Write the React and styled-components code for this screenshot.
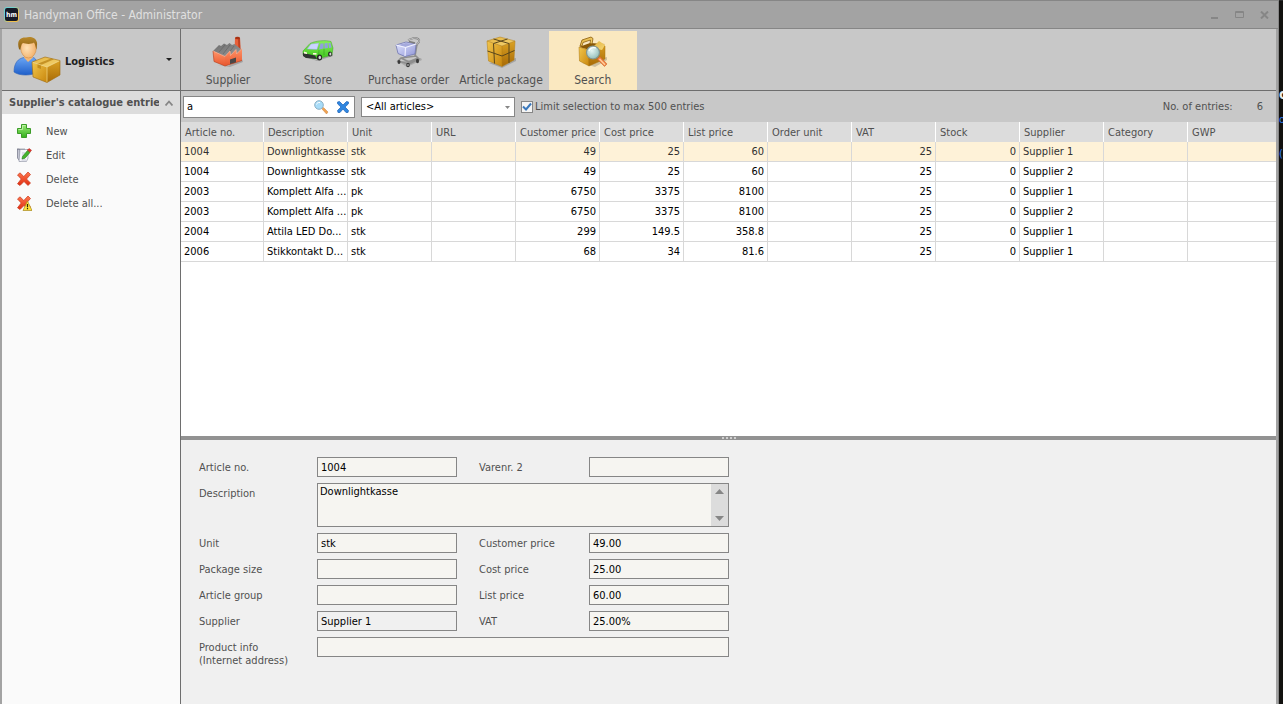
import React, { useState } from "react";
import styled, { createGlobalStyle } from "styled-components";

const GlobalStyle = createGlobalStyle`
  * {
    box-sizing: border-box;
  }
  body {
    margin: 0;
    background: #12110f;
  }
  body, button, input, select, textarea {
    font-family: "DejaVu Sans Condensed", "DejaVu Sans", sans-serif;
    font-size: 11px;
  }
  button {
    border: 0;
    padding: 0;
    background: none;
    color: inherit;
  }
`;

const Desktop = styled.div`
  display: flex;
  min-height: 100vh;
`;

const Window = styled.div`
  flex: 1;
  min-width: 0;
  display: flex;
  flex-direction: column;
  border-top: 1px solid #868686;
  border-right: 1px solid #868686;
  background: #a3a3a3;
`;

const Behind = styled.div`
  width: 4px;
  overflow: hidden;
  border-top: 1px solid #2a2a2a;
  padding-top: 83px;
  color: #2f7ff0;
  line-height: 24px;
  white-space: nowrap;
  strong {
    display: block;
    color: #e8e8e8;
    font-size: 14px;
    line-height: 20px;
  }
  span {
    display: block;
    padding-top: 4px;
  }
  span + span {
    padding-top: 10px;
  }
`;

const TitleBar = styled.header`
  display: flex;
  align-items: center;
  height: 28px;
  padding: 0 1px 0 4px;
  border-bottom: 1px solid #868686;
`;

const Title = styled.h1`
  flex: 1;
  margin: 0 0 0 5px;
  font-size: 12px;
  font-weight: 400;
  color: #e0e0e0;
`;

const WindowButton = styled.button`
  display: flex;
  width: 25px;
  height: 16px;
  align-items: center;
  justify-content: center;
`;

const Main = styled.div`
  flex: 1;
  display: flex;
  padding: 0 2px;
`;

const Sidebar = styled.aside`
  width: 179px;
  flex: none;
  background: #fafafa;
  border-right: 1px solid #6e6e6e;
  color: #505050;
`;

const ModuleButton = styled.button`
  display: flex;
  align-items: center;
  width: 100%;
  height: 62px;
  padding: 0 8px 0 11px;
  background: #c8c8c8;
  border-bottom: 1px solid #6e6e6e;
  font-weight: 700;
  color: #202020;
  text-align: left;
  span {
    flex: 1;
    padding: 3px 0 0 4px;
  }
`;

const SectionHeader = styled.button`
  display: flex;
  align-items: center;
  width: 100%;
  height: 23px;
  padding: 0 7px;
  background: #dcdcdc;
  font-weight: 700;
  text-align: left;
  span {
    flex: 1;
    margin-right: 6px;
    overflow: hidden;
    white-space: nowrap;
  }
`;

const ActionList = styled.ul`
  list-style: none;
  margin: 0;
  padding: 5px 0;
`;

const ActionButton = styled.button`
  display: flex;
  align-items: center;
  gap: 14px;
  width: 100%;
  height: 24px;
  padding-left: 14px;
`;

const Content = styled.main`
  flex: 1;
  min-width: 0;
  display: flex;
  flex-direction: column;
  background: #c8c8c8;
`;

const Toolbar = styled.nav`
  display: flex;
  gap: 2px;
  height: 62px;
  padding: 2px 3px 0;
  border-bottom: 1px solid #6e6e6e;
`;

const ToolButton = styled.button`
  display: flex;
  flex-direction: column;
  align-items: center;
  gap: 4px;
  min-width: 88px;
  padding: 5px 4px 0;
  font-size: 12px;
  line-height: 16px;
  color: #505050;
  background: ${(props) => (props.$active ? "#fae8c0" : "transparent")};
`;

const FilterBar = styled.div`
  display: flex;
  align-items: center;
  height: 31px;
  padding: 0 13px 0 2px;
  color: #505050;
`;

const SearchBox = styled.div`
  display: flex;
  align-items: center;
  width: 172px;
  height: 22px;
  background: #fff;
  border: 1px solid #868686;
  input {
    flex: 1;
    min-width: 0;
    height: 18px;
    border: 0;
    padding: 0 3px;
    outline: 0;
    background: none;
  }
  button {
    display: flex;
    margin-right: 4px;
  }
  button:first-of-type {
    margin-right: 7px;
  }
`;

const SelectBox = styled.div`
  position: relative;
  margin: 0 6px;
  select {
    display: block;
    appearance: none;
    width: 154px;
    height: 20px;
    padding: 0 16px 0 4px;
    border: 1px solid #868686;
    border-radius: 0;
    background: #fff;
    color: #000;
  }
  svg {
    position: absolute;
    right: 5px;
    top: 9px;
    pointer-events: none;
  }
`;

const CheckLabel = styled.label`
  display: flex;
  align-items: center;
  gap: 2px;
  input {
    position: absolute;
    width: 12px;
    height: 12px;
    margin: 0;
    opacity: 0;
  }
`;

const EntryCount = styled.div`
  display: flex;
  gap: 24px;
  margin-left: auto;
`;

const TableArea = styled.div`
  flex: 1;
  overflow: hidden;
  background: #fff;
`;

const Table = styled.table`
  width: 100%;
  table-layout: fixed;
  border-collapse: separate;
  border-spacing: 0;
  th,
  td {
    height: 20px;
    padding: 0 3px;
    overflow: hidden;
    white-space: nowrap;
    line-height: 18px;
  }
  th {
    padding: 1px 3px 0 4px;
    font-weight: 400;
    text-align: left;
    color: #505050;
    background: #dcdcdc;
    border-right: 1px solid #fff;
  }
  td {
    border-right: 1px solid #d8d8d8;
    border-bottom: 1px solid #d8d8d8;
  }
  th:last-child,
  td:last-child {
    border-right: 0;
  }
`;

const Col = styled.col`
  width: ${(props) => props.$width};
`;

const Row = styled.tr`
  background: ${(props) => (props.$selected ? "#fef2d8" : "#fff")};
  color: ${(props) => (props.$selected ? "#303030" : "#000")};
`;

const Cell = styled.td`
  text-align: ${(props) => (props.$number ? "right" : "left")};
`;

const Splitter = styled.div`
  display: flex;
  align-items: center;
  justify-content: center;
  gap: 2px;
  height: 4px;
  background: #929292;
  i {
    width: 2px;
    height: 2px;
    background: #d0d0d0;
  }
`;

const Details = styled.form`
  display: grid;
  grid-template-columns: 118px 162px 110px 140px;
  row-gap: 6px;
  padding: 17px 18px 37px;
  background: #f0f0f0;
  color: #505050;
`;

const FieldLabel = styled.label`
  line-height: 13px;
  padding-top: 4px;
`;

const Field = styled.input`
  width: 140px;
  height: 20px;
  padding: 0 3px;
  border: 1px solid #868686;
  border-radius: 0;
  background: ${(props) => (props.$locked ? "#f0f0f0" : "#f6f5f1")};
  color: #000;
`;

const WideField = styled(Field)`
  grid-column: 2 / -1;
  width: 100%;
`;

const MemoBox = styled.div`
  grid-column: 2 / -1;
  display: flex;
  height: 44px;
  border: 1px solid #868686;
  background: #f6f5f1;
  textarea {
    flex: 1;
    border: 0;
    padding: 1px 2px;
    resize: none;
    outline: 0;
    overflow: hidden;
    line-height: 13px;
    background: none;
    color: #000;
  }
`;

const ScrollTrack = styled.div`
  display: flex;
  flex-direction: column;
  justify-content: space-between;
  align-items: center;
  width: 17px;
  padding: 5px 0;
  background: #dcdcdc;
  button {
    display: flex;
  }
`;

const HiddenSvg = styled.svg`
  position: absolute;
`;

/* ---------- icons ---------- */

const Gradients = () => (
  <HiddenSvg width="0" height="0" aria-hidden="true">
    <defs>
      <linearGradient id="logoEdge" x1="0" y1="0" x2="1" y2="1">
        <stop offset="0.3" stopColor="#6fd0d0" />
        <stop offset="0.7" stopColor="#f0bf4a" />
      </linearGradient>
      <linearGradient id="boxTop" x1="0" y1="0" x2="1" y2="1">
        <stop offset="0" stopColor="#e2b13c" />
        <stop offset="1" stopColor="#f6d777" />
      </linearGradient>
      <linearGradient id="boxLeft" x1="0" y1="0" x2="1" y2="1">
        <stop offset="0" stopColor="#f2c64c" />
        <stop offset="1" stopColor="#c8860c" />
      </linearGradient>
      <linearGradient id="boxRight" x1="0" y1="0" x2="0" y2="1">
        <stop offset="0" stopColor="#dba223" />
        <stop offset="1" stopColor="#a86a06" />
      </linearGradient>
      <linearGradient id="shirt" x1="0" y1="0" x2="0" y2="1">
        <stop offset="0" stopColor="#6aa5f4" />
        <stop offset="1" stopColor="#1f5fc9" />
      </linearGradient>
      <radialGradient id="face" cx="0.4" cy="0.5" r="0.7">
        <stop offset="0" stopColor="#ffe2b8" />
        <stop offset="1" stopColor="#f0a85c" />
      </radialGradient>
      <linearGradient id="hair" x1="0" y1="0" x2="0" y2="1">
        <stop offset="0" stopColor="#b98a2c" />
        <stop offset="1" stopColor="#8a5c10" />
      </linearGradient>
      <linearGradient id="brick" x1="0" y1="0" x2="0" y2="1">
        <stop offset="0" stopColor="#ff9468" />
        <stop offset="1" stopColor="#e8562e" />
      </linearGradient>
      <linearGradient id="roof" x1="0" y1="0" x2="1" y2="1">
        <stop offset="0" stopColor="#6c6c6c" />
        <stop offset="1" stopColor="#9b9b9b" />
      </linearGradient>
      <linearGradient id="van" x1="0" y1="0" x2="0" y2="1">
        <stop offset="0" stopColor="#8af05a" />
        <stop offset="1" stopColor="#3cc41c" />
      </linearGradient>
      <linearGradient id="basket" x1="0" y1="0" x2="1" y2="1">
        <stop offset="0" stopColor="#e3e6ff" />
        <stop offset="1" stopColor="#9197d8" />
      </linearGradient>
      <radialGradient id="lens" cx="0.4" cy="0.35" r="0.7">
        <stop offset="0" stopColor="#e6f6f4" />
        <stop offset="1" stopColor="#8fbcb8" />
      </radialGradient>
      <linearGradient id="plus" x1="0" y1="0" x2="0" y2="1">
        <stop offset="0" stopColor="#9cec78" />
        <stop offset="1" stopColor="#35b01c" />
      </linearGradient>
      <linearGradient id="cross" x1="0" y1="0" x2="0" y2="1">
        <stop offset="0" stopColor="#ff7a50" />
        <stop offset="1" stopColor="#e02c10" />
      </linearGradient>
    </defs>
  </HiddenSvg>
);

const LogoIcon = () => (
  <svg width="15" height="15" viewBox="0 0 15 15" aria-hidden="true">
    <rect width="15" height="15" rx="3" fill="url(#logoEdge)" />
    <rect x="1" y="1" width="13" height="13" rx="2" fill="#161a26" />
    <text x="7.5" y="10" textAnchor="middle" fontSize="7" fontWeight="700" fill="#fff">
      hm
    </text>
  </svg>
);

const LogisticsIcon = () => (
  <svg width="48" height="48" viewBox="0 0 48 48" aria-hidden="true">
    <path d="M1 36C1 27 5 22.500 11 21.500L20 21.500C24 22.500 25 28 25 36C19 40 6 40 1 36Z" fill="url(#shirt)" stroke="#2a60b8" strokeWidth="0.6" />
    <path d="M11 21.500L15 26L20 21.500L19 18L12 18Z" fill="#f3b877" />
    <ellipse cx="15.500" cy="12" rx="7.800" ry="10" fill="url(#face)" stroke="#c98338" strokeWidth="0.5" />
    <path d="M6 13C3.500 5 7 1 13 1.500C19 -0.500 25 3 24 9L23.500 13.500C22.500 11 22.500 9 21 6.500C17 9 12 7.500 10 7C8 8 8 11 7.200 14Z" fill="url(#hair)" />
    <path d="M19 26L32 21L47 24.500L34 31Z" fill="url(#boxTop)" />
    <path d="M19 26L34 31L34 46.500L20 41Z" fill="url(#boxLeft)" />
    <path d="M34 31L47 24.500L47 39L34 46.500Z" fill="url(#boxRight)" />
    <path d="M24.500 27.800L38 22.500L41 23.200L28 29L28 33L24.500 31.800Z" fill="#b88114" opacity="0.75" />
    <path d="M19 26L34 31L47 24.500M34 31V46.500" fill="none" stroke="#f6dc8a" strokeWidth="0.7" />
    <path d="M19 26L32 21L47 24.500V39L34 46.500L20 41Z" fill="none" stroke="#a06a0c" strokeWidth="0.6" />
  </svg>
);

const SupplierIcon = () => (
  <svg width="32" height="32" viewBox="0 0 32 32" aria-hidden="true">
    <path d="M5 29L18 31L31 26L30 23L16 30Z" fill="#000" opacity="0.18" />
    <path d="M23 2L28 2L28.500 16L22.500 16Z" fill="#e8603a" />
    <path d="M26 2H28L28.500 16H26.500Z" fill="#c04020" />
    <ellipse cx="25.500" cy="2" rx="2.500" ry="1.200" fill="#a83214" />
    <path d="M1 15L7 9L9 10L12 7.500L15 9L17.500 7L20 9L22.500 8L30 14L27 18L13 21Z" fill="url(#roof)" />
    <path d="M7 16L13 9M11 18L18 9M16 18L22 10" stroke="#606060" strokeWidth="0.6" />
    <path d="M1 15L13 20.500L13 30L2 25.500Z" fill="url(#brick)" />
    <path d="M13 20.500L18 15L18.500 19.500L24 13.500L24.500 18L30 12.500L30 24.500L13 30Z" fill="url(#brick)" />
    <path d="M1 15L13 20.500L18 15L18.500 19.500L24 13.500L24.500 18L30 12.500" fill="none" stroke="#ffb090" strokeWidth="0.7" />
    <path d="M18 23.500L24 21.500V26.500L18 28.300Z" fill="#4a4646" />
    <path d="M1 15L2 25.500L13 30L30 24.500" fill="none" stroke="#b43a18" strokeWidth="0.6" />
  </svg>
);

const StoreIcon = () => (
  <svg width="32" height="32" viewBox="0 0 32 32" aria-hidden="true">
    <path d="M4 21L14 24L31 18L31 20L15 25Z" fill="#000" opacity="0.2" />
    <path d="M1 15L8 7.500C14 4.500 24 4 29 5.500L31 12L30 19L15 23L3 21L1 19Z" fill="url(#van)" stroke="#3aa020" strokeWidth="0.5" />
    <path d="M5 13L9 8L17 7L15 13.500Z" fill="#c9d4ff" stroke="#8c9ac8" strokeWidth="0.4" />
    <path d="M18.500 7.500H21.500V12.500L17 13.500ZM22.500 7.200L25.500 7L26 12L22.500 12.500ZM26.500 7L28.500 7L29.500 11.500L27 12Z" fill="#8fa0dc" />
    <path d="M17 14L16.500 22M22 13L22 19" stroke="#2a9014" strokeWidth="0.5" />
    <path d="M1 17L13 19.500L15 23L4 22L1 20Z" fill="#303432" />
    <path d="M2 15.500L5 16.500V18L2 17.500ZM11 17L14.500 17V18.800L11 18.500Z" fill="#fff7dc" />
    <ellipse cx="17.500" cy="21.500" rx="2.600" ry="3" fill="#252525" />
    <ellipse cx="17.800" cy="21.500" rx="1.300" ry="1.700" fill="#d4d4d4" />
    <ellipse cx="28" cy="18" rx="2" ry="2.600" fill="#252525" />
    <ellipse cx="28.300" cy="18" rx="1" ry="1.500" fill="#d4d4d4" />
  </svg>
);

const CartIcon = () => (
  <svg width="32" height="32" viewBox="0 0 32 32" aria-hidden="true">
    <path d="M6 26L14 31L29 24L28 22Z" fill="#000" opacity="0.15" />
    <path d="M5 25L8 22L23 20L26 23L16 28ZM8 22L16 26L25 22M22 20L24 8" fill="none" stroke="#8e8e8e" strokeWidth="1.600" />
    <path d="M3 9L13 6L23 8L22 18L12 20.500L5 17.500Z" fill="url(#basket)" stroke="#7076b0" strokeWidth="0.8" />
    <path d="M5 9L13 7L21.500 8.500L12.500 11Z" fill="#a4a9dc" />
    <path d="M3 9L12.500 11.500L23 8M12.500 11.500L12 20" fill="none" stroke="#f2f3ff" strokeWidth="1.100" />
    <path d="M15 4L21 2C25 2 27 3.500 26 6L23.500 9M16 5.500L22 7" fill="none" stroke="#7c7c7c" strokeWidth="1.800" />
    <path d="M15 4L21 2C25 2 27 3.500 26 6L23.500 9" fill="none" stroke="#d0d0d0" strokeWidth="0.800" />
    <ellipse cx="6" cy="26" rx="1.500" ry="2" fill="#3a3a3a" />
    <ellipse cx="15" cy="29" rx="1.800" ry="2.200" fill="#3a3a3a" />
    <ellipse cx="24.500" cy="25" rx="1.500" ry="2.200" fill="#3a3a3a" />
    <ellipse cx="15" cy="29" rx="0.700" ry="1" fill="#c4c4c4" />
  </svg>
);

const PackageIcon = () => (
  <svg width="32" height="32" viewBox="0 0 32 32" aria-hidden="true">
    <path d="M4 27L17 32L31 25V22Z" fill="#000" opacity="0.18" />
    <path d="M2 5L15 1L30 5L17 10Z" fill="url(#boxTop)" />
    <path d="M2 5L17 10L17 30.500L3.500 25Z" fill="url(#boxLeft)" />
    <path d="M17 10L30 5L29 24L17 30.500Z" fill="url(#boxRight)" />
    <path d="M2 5L15 1L30 5L29 24L17 30.500L3.500 25ZM2 5L17 10L30 5M17 10V30.500" fill="none" stroke="#b07c14" strokeWidth="0.500" />
    <path d="M8.500 3L24 7.500V27M22.500 3L8.500 7.500L9.500 27.500M2.500 15L17 20L29.500 14.500" fill="none" stroke="#59461c" strokeWidth="1" />
  </svg>
);

const SearchPackageIcon = () => (
  <svg width="32" height="32" viewBox="0 0 32 32" aria-hidden="true">
    <path d="M5 27L18 31L30 24V21Z" fill="#000" opacity="0.18" />
    <path d="M2 11L13 7L28 8L13 14Z" fill="#8a5806" />
    <path d="M3 10L5 4L14 1L16 2.500L15 8L13 7.500L13.500 4L6 6.500L5 10Z" fill="url(#boxTop)" stroke="#8a5c0c" strokeWidth="0.800" />
    <path d="M2 11L12 14L12 30L2.500 25Z" fill="url(#boxLeft)" stroke="#a9740e" strokeWidth="0.500" />
    <path d="M12 14L22 7L28 10L28 23L12 30Z" fill="url(#boxRight)" stroke="#a9740e" strokeWidth="0.500" />
    <path d="M15 12L22 5L28 9L25 14Z" fill="url(#boxTop)" />
    <path d="M20 23L23 20.500L30 28L27.500 30.500Z" fill="#f08040" stroke="#c05c28" strokeWidth="0.500" />
    <path d="M22.500 23L28 28.800" stroke="#ffd0a0" strokeWidth="1.400" />
    <circle cx="16" cy="16.500" r="6.500" fill="url(#lens)" stroke="#83948f" strokeWidth="1.200" />
    <path d="M12 15C13 12 16 11 19 12" fill="none" stroke="#fff" strokeWidth="1.200" />
  </svg>
);

const NewIcon = () => (
  <svg width="16" height="16" viewBox="0 0 16 16" aria-hidden="true">
    <path d="M5.500 1.500H10.500V5.500H14.500V10.500H10.500V14.500H5.500V10.500H1.500V5.500H5.500Z" fill="url(#plus)" stroke="#3c9c28" />
    <path d="M6.500 6.500V2.500H9.500M2.500 6.500H6.500" fill="none" stroke="#d2f8c2" strokeWidth="0.700" />
  </svg>
);

const EditIcon = () => (
  <svg width="16" height="16" viewBox="0 0 16 16" aria-hidden="true">
    <path d="M1.500 2L4 2.500V14.500L1.500 11Z" fill="#c4c6d2" stroke="#7c7f90" strokeWidth="0.800" />
    <path d="M4 2.500H12V11L10.500 14.500H3Z" fill="#f6f6fa" stroke="#9a9dac" strokeWidth="0.700" />
    <path d="M1.500 2H9" stroke="#606474" strokeDasharray="1 1" />
    <path d="M6 6H9M6 8H8M5.500 13H10" stroke="#b0b4c4" strokeWidth="0.700" />
    <path d="M6.500 9.500L11.500 3.500L14 5.500L9 11.200L6 12Z" fill="#46b42c" stroke="#237a18" strokeWidth="0.600" />
    <path d="M11.500 3L13 1.500L15.500 3.200L14 5.200Z" fill="#e63428" stroke="#a02018" strokeWidth="0.500" />
  </svg>
);

const DeleteIcon = ({ warning }) => (
  <svg width="16" height="16" viewBox="0 0 16 16" aria-hidden="true">
    <path d="M1.500 4L4 1.800L7.800 5.500L12 1L14.500 3.500L10.500 8L14.500 12L12 14.500L8 10.500L4 14.500L1.500 12.800L5.200 8Z" fill="url(#cross)" stroke="#c8381c" strokeWidth="0.700" strokeLinejoin="round" />
    {warning && (
      <>
        <path d="M11.500 6L16 15.500H7Z" fill="#ffe13c" stroke="#a88a20" strokeWidth="0.700" strokeLinejoin="round" />
        <path d="M11.500 9V12.200M11.500 13V14.300" stroke="#2b2410" strokeWidth="1.200" />
      </>
    )}
  </svg>
);

const MagnifierIcon = () => (
  <svg width="16" height="16" viewBox="0 0 16 16" aria-hidden="true">
    <path d="M9 10L10.500 8.500L15 13L13.500 15Z" fill="#f0a250" stroke="#c88444" strokeWidth="0.500" />
    <circle cx="6" cy="6" r="4.300" fill="#a8dcf8" stroke="#8cb0c4" />
    <path d="M3.500 5.500C4 4 5 3.300 7 3.500" fill="none" stroke="#fff" />
  </svg>
);

const ClearIcon = () => (
  <svg width="14" height="14" viewBox="0 0 14 14" aria-hidden="true">
    <path d="M1.500 2L3.500 1.500L7 5L10.500 1.500L12.500 2L12.300 4L9 7L12.500 10.500L12 12.500L10 12.500L7 9L4 12.500L2 12.500L1.500 10.500L5 7L1.700 4Z" fill="#2f86e0" stroke="#1a62b8" strokeWidth="0.700" />
  </svg>
);

const CheckIcon = ({ checked }) => (
  <svg width="12" height="12" viewBox="0 0 12 12" aria-hidden="true">
    <rect x="0.500" y="0.500" width="11" height="11" fill="#f4f4f4" stroke="#868686" />
    {checked && <path d="M2 5.500L5 8.500L10 2.500" fill="none" stroke="#3a78bc" strokeWidth="2" />}
  </svg>
);

const Triangle = ({ size = 5, up, color = "#868686" }) => (
  <svg width={size} height={Math.ceil(size / 2)} viewBox="0 0 10 5" preserveAspectRatio="none" aria-hidden="true">
    <path d={up ? "M0 5L5 0L10 5Z" : "M0 0H10L5 5Z"} fill={color} />
  </svg>
);

const ChevronUp = () => (
  <svg width="8" height="6" viewBox="0 0 8 6" aria-hidden="true">
    <path d="M0.500 5.500L4 1.500L7.500 5.500" fill="none" stroke="#868686" strokeWidth="1.800" />
  </svg>
);

/* ---------- data ---------- */

const actions = [
  { label: "New", icon: <NewIcon /> },
  { label: "Edit", icon: <EditIcon /> },
  { label: "Delete", icon: <DeleteIcon /> },
  { label: "Delete all...", icon: <DeleteIcon warning /> },
];

const tools = [
  { label: "Supplier", icon: <SupplierIcon /> },
  { label: "Store", icon: <StoreIcon /> },
  { label: "Purchase order", icon: <CartIcon /> },
  { label: "Article package", icon: <PackageIcon /> },
  { label: "Search", icon: <SearchPackageIcon /> },
];

const columns = [
  { key: "no", label: "Article no.", width: "83px" },
  { key: "description", label: "Description" },
  { key: "unit", label: "Unit" },
  { key: "url", label: "URL" },
  { key: "customerPrice", label: "Customer price", number: true },
  { key: "costPrice", label: "Cost price", number: true },
  { key: "listPrice", label: "List price", number: true },
  { key: "orderUnit", label: "Order unit" },
  { key: "vat", label: "VAT", number: true },
  { key: "stock", label: "Stock", number: true },
  { key: "supplier", label: "Supplier" },
  { key: "category", label: "Category" },
  { key: "gwp", label: "GWP", width: "auto" },
];

const article = (no, description, unit, customerPrice, costPrice, listPrice, supplier) => ({
  no,
  description,
  unit,
  customerPrice,
  costPrice,
  listPrice,
  vat: 25,
  stock: 0,
  supplier,
});

const articles = [
  article("1004", "Downlightkasse", "stk", 49, 25, 60, "Supplier 1"),
  article("1004", "Downlightkasse", "stk", 49, 25, 60, "Supplier 2"),
  article("2003", "Komplett Alfa ...", "pk", 6750, 3375, 8100, "Supplier 1"),
  article("2003", "Komplett Alfa ...", "pk", 6750, 3375, 8100, "Supplier 2"),
  article("2004", "Attila LED Do...", "stk", 299, 149.5, 358.8, "Supplier 1"),
  article("2006", "Stikkontakt D...", "stk", 68, 34, 81.6, "Supplier 1"),
];

const LabeledField = ({ id, label, value, locked }) => (
  <>
    <FieldLabel htmlFor={id}>{label}</FieldLabel>
    <Field id={id} defaultValue={value} $locked={locked} readOnly={locked} />
  </>
);

const App = () => {
  const [query, setQuery] = useState("a");
  const [limited, setLimited] = useState(true);
  const [activeTool, setActiveTool] = useState("Search");
  const [selected, setSelected] = useState(0);

  return (
    <Desktop>
      <GlobalStyle />
      <Gradients />
      <Window>
        <TitleBar>
          <LogoIcon />
          <Title>Handyman Office - Administrator</Title>
          <WindowButton aria-label="Minimize">
            <svg width="7" height="8">
              <path d="M0 6H7V8H0Z" fill="#868686" />
            </svg>
          </WindowButton>
          <WindowButton aria-label="Maximize">
            <svg width="9" height="7">
              <path d="M0.500 0.500H8.500V6.500H0.500ZM0 1.500H9" fill="none" stroke="#868686" />
            </svg>
          </WindowButton>
          <WindowButton aria-label="Close">
            <svg width="9" height="8">
              <path d="M1 0.500L8 7.500M8 0.500L1 7.500" stroke="#868686" strokeWidth="2" />
            </svg>
          </WindowButton>
        </TitleBar>
        <Main>
          <Sidebar>
            <ModuleButton>
              <LogisticsIcon />
              <span>Logistics</span>
              <Triangle size={6} color="#202020" />
            </ModuleButton>
            <SectionHeader>
              <span>Supplier's catalogue entries</span>
              <ChevronUp />
            </SectionHeader>
            <ActionList>
              {actions.map((action) => (
                <li key={action.label}>
                  <ActionButton>
                    {action.icon}
                    {action.label}
                  </ActionButton>
                </li>
              ))}
            </ActionList>
          </Sidebar>
          <Content>
            <Toolbar>
              {tools.map((tool) => (
                <ToolButton
                  key={tool.label}
                  $active={tool.label === activeTool}
                  onClick={() => setActiveTool(tool.label)}
                >
                  {tool.icon}
                  {tool.label}
                </ToolButton>
              ))}
            </Toolbar>
            <FilterBar>
              <SearchBox>
                <input
                  aria-label="Search articles"
                  value={query}
                  onChange={(e) => setQuery(e.target.value)}
                />
                <button aria-label="Search">
                  <MagnifierIcon />
                </button>
                <button aria-label="Clear" onClick={() => setQuery("")}>
                  <ClearIcon />
                </button>
              </SearchBox>
              <SelectBox>
                <select aria-label="Article filter">
                  <option>&lt;All articles&gt;</option>
                </select>
                <Triangle />
              </SelectBox>
              <CheckLabel>
                <input
                  type="checkbox"
                  checked={limited}
                  onChange={(e) => setLimited(e.target.checked)}
                />
                <CheckIcon checked={limited} />
                Limit selection to max 500 entries
              </CheckLabel>
              <EntryCount>
                <span>No. of entries:</span>
                <span>{articles.length}</span>
              </EntryCount>
            </FilterBar>
            <TableArea>
              <Table>
                <colgroup>
                  {columns.map((column) => (
                    <Col key={column.key} $width={column.width || "84px"} />
                  ))}
                </colgroup>
                <thead>
                  <tr>
                    {columns.map((column) => (
                      <th key={column.key}>{column.label}</th>
                    ))}
                  </tr>
                </thead>
                <tbody>
                  {articles.map((row, index) => (
                    <Row
                      key={index}
                      $selected={index === selected}
                      onClick={() => setSelected(index)}
                    >
                      {columns.map((column) => (
                        <Cell key={column.key} $number={column.number}>
                          {row[column.key]}
                        </Cell>
                      ))}
                    </Row>
                  ))}
                </tbody>
              </Table>
            </TableArea>
            <Splitter>
              <i />
              <i />
              <i />
              <i />
            </Splitter>
            <Details>
              <LabeledField id="article-no" label="Article no." value="1004" />
              <LabeledField id="varenr-2" label="Varenr. 2" value="" />
              <FieldLabel htmlFor="description">Description</FieldLabel>
              <MemoBox>
                <textarea id="description" defaultValue="Downlightkasse" />
                <ScrollTrack>
                  <button type="button" aria-label="Scroll up">
                    <Triangle size={9} up />
                  </button>
                  <button type="button" aria-label="Scroll down">
                    <Triangle size={9} />
                  </button>
                </ScrollTrack>
              </MemoBox>
              <LabeledField id="unit" label="Unit" value="stk" />
              <LabeledField id="customer-price" label="Customer price" value="49.00" />
              <LabeledField id="package-size" label="Package size" value="" />
              <LabeledField id="cost-price" label="Cost price" value="25.00" />
              <LabeledField id="article-group" label="Article group" value="" />
              <LabeledField id="list-price" label="List price" value="60.00" />
              <LabeledField id="supplier" label="Supplier" value="Supplier 1" locked />
              <LabeledField id="vat" label="VAT" value="25.00%" />
              <FieldLabel htmlFor="product-info">
                Product info
                <br />
                (Internet address)
              </FieldLabel>
              <WideField id="product-info" defaultValue="" />
            </Details>
          </Content>
        </Main>
      </Window>
      <Behind aria-hidden="true">
        <strong>c</strong>
        <span>oc</span>
        <span>(l</span>
      </Behind>
    </Desktop>
  );
};

export default App;
